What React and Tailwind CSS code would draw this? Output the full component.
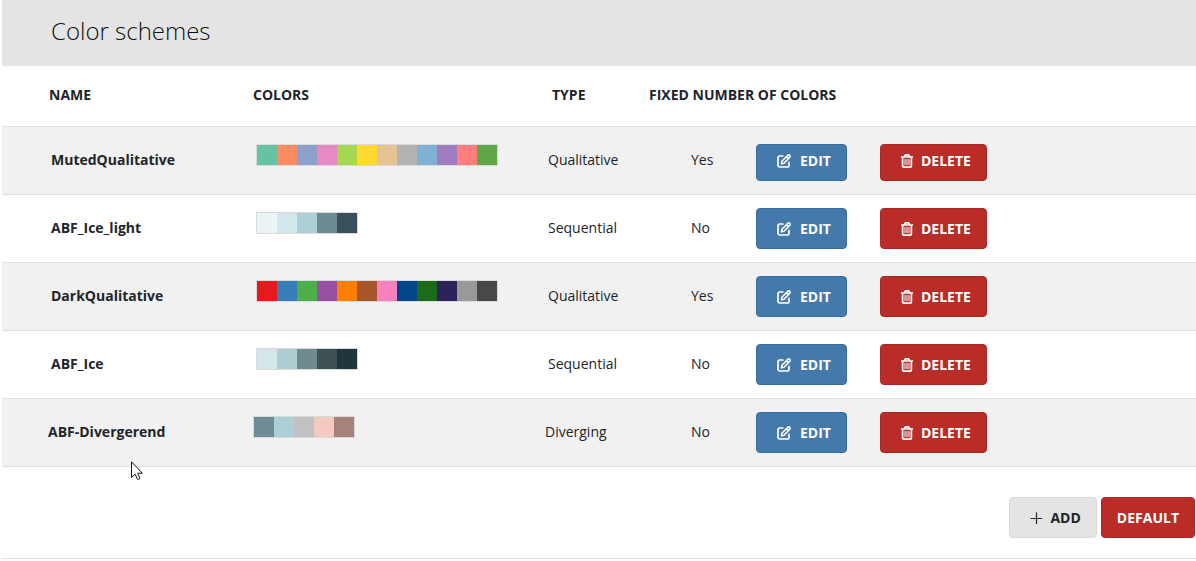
import React from "react";

const schemes = [
  {
    name: "MutedQualitative",
    type: "Qualitative",
    fixed: true,
    colors: ["#66c2a5", "#fc8d62", "#8da0cb", "#e78ac3", "#a6d854", "#ffd92f", "#e5c494", "#b3b3b3", "#80b1d3", "#9f7dc0", "#ff7f7f", "#61a644"],
  },
  {
    name: "ABF_Ice_light",
    type: "Sequential",
    fixed: false,
    colors: ["#eaf3f6", "#d4e7ec", "#aecfd6", "#6d8b92", "#384f5c"],
  },
  {
    name: "DarkQualitative",
    type: "Qualitative",
    fixed: true,
    colors: ["#e41a1c", "#377eb8", "#4daf4a", "#984ea3", "#ff7f00", "#a65628", "#f781bf", "#00468b", "#1b6b1a", "#2c235a", "#999999", "#484848"],
  },
  {
    name: "ABF_Ice",
    type: "Sequential",
    fixed: false,
    colors: ["#d5e6e9", "#adcfd3", "#6e8c8e", "#3d5052", "#20363e"],
  },
  {
    name: "ABF-Divergerend",
    type: "Diverging",
    fixed: false,
    colors: ["#6d8c95", "#aecfd6", "#c1c1c1", "#f4c9bf", "#a5837c"],
  },
];

const variants = {
  blue: "bg-[#4479ab] border-[#3a6d9d] text-white",
  red: "bg-[#b92c28] border-[#a82824] text-white",
  grey: "bg-[#e4e4e4] border-[#d9d9d9] text-[#212529]",
};

const Button = ({ variant, icon, size = "h-[41px] pt-px", children }) => (
  <button
    type="button"
    className={`inline-flex items-center gap-2 rounded border pr-[15px] font-bold uppercase ${icon ? "pl-5" : "pl-[15px]"} ${variants[variant]} ${size}`}
  >
    {icon}
    {children}
  </button>
);

const Swatches = ({ colors }) => (
  <div className="inline-flex border border-[#dadada]">
    {colors.map((color) => (
      <span key={color} className="h-5 w-5" style={{ backgroundColor: color }} />
    ))}
  </div>
);

const EditIcon = () => (
  <svg viewBox="0 0 15 14" className="h-[14px] w-[15px]" fill="none" stroke="currentColor" strokeWidth="1.7" strokeLinecap="round" strokeLinejoin="round">
    <path d="M5.800 2H2.700A1.700 1.700 0 0 0 1 3.700v7.600A1.700 1.700 0 0 0 2.700 13h7.600a1.700 1.700 0 0 0 1.700-1.700V8.400" />
    <path d="M4.900 7.200 10.700 1.400a1.400 1.400 0 0 1 2 2L7 9.200l-2.600.6zM9.400 2.700l2 2" strokeWidth="1.5" />
  </svg>
);

const TrashIcon = () => (
  <svg viewBox="0 0 12 14" className="h-[14px] w-3" fill="none" stroke="currentColor" strokeWidth="1.7" strokeLinecap="round" strokeLinejoin="round">
    <path d="M.5 3h11M3.200 2.800l.9-1.700c.1-.2.300-.3.500-.3h2.800c.2 0 .4.100.5.300l.9 1.700M1.600 3.200v8.500c0 .8.600 1.400 1.400 1.400h6c.8 0 1.400-.6 1.400-1.400V3.200" />
    <path d="M4 5.500v5.300M6 5.500v5.300M8 5.500v5.300" strokeWidth="1" />
  </svg>
);

const PlusIcon = () => (
  <svg viewBox="0 0 12 12" className="h-3 w-3" fill="none" stroke="currentColor" strokeWidth="1.2" strokeLinecap="round">
    <path d="M6.500 .8v10.700M1 6.500h10.700" />
  </svg>
);

const SchemeRow = ({ scheme, first, last }) => {
  const inset = last ? "" : "pl-[3px]";
  const buttonSize = first ? "h-[37px] pb-0.5" : "h-[41px] pt-px";

  return (
    <tr className="h-[68px] border-b border-[#e0e0e0] odd:bg-[#f1f1f1]">
      <td>
        <div className={`ml-[46px] font-bold ${inset}`}>{scheme.name}</div>
      </td>
      <td className="pt-[17px] align-top leading-none">
        <div className={inset}>
          <Swatches colors={scheme.colors} />
        </div>
      </td>
      <td>
        <div className={inset}>{scheme.type}</div>
      </td>
      <td className="pl-[42px]">{scheme.fixed ? "Yes" : "No"}</td>
      <td className="pb-[13px] align-bottom leading-none">
        <Button variant="blue" size={buttonSize} icon={<EditIcon />}>Edit</Button>
      </td>
      <td className="pb-[13px] align-bottom leading-none">
        <Button variant="red" size={buttonSize} icon={<TrashIcon />}>Delete</Button>
      </td>
    </tr>
  );
};

const Cursor = () => (
  <svg viewBox="0 0 12 19" className="pointer-events-none absolute top-[461px] left-[131px] h-[19px] w-3" fill="#fff" stroke="#15151f" strokeWidth="1">
    <path d="M.5 .8v15.700l3.600-3.400 2.300 5 .9.4 1.400-.6.2-.8-2.200-4.900h4.600z" />
  </svg>
);

const App = () => (
  <div className="relative bg-white pl-0.5 font-['Open_Sans',sans-serif] text-sm text-[#212529]">
    <header className="bg-[#e4e4e4] px-[49px] pt-[13px] pb-[17px]">
      <h1 className="text-2xl leading-9 font-light text-[#111]">Color schemes</h1>
    </header>

    <table className="w-full table-fixed border-collapse text-left">
      <colgroup>
        <col className="w-[251px]" />
        <col className="w-[292px]" />
        <col className="w-[104px]" />
        <col className="w-[107px]" />
        <col className="w-[124px]" />
        <col />
      </colgroup>
      <thead>
        <tr className="h-[60px] border-b border-[#e0e0e0] uppercase *:pb-0.5">
          <th className="pl-[47px]">Name</th>
          <th>Colors</th>
          <th className="pl-[7px]">Type</th>
          <th colSpan={3}>Fixed number of colors</th>
        </tr>
      </thead>
      <tbody>
        {schemes.map((scheme, i) => (
          <SchemeRow key={scheme.name} scheme={scheme} first={i === 0} last={i === schemes.length - 1} />
        ))}
      </tbody>
    </table>

    <div className="flex justify-end gap-1 border-b border-[#e0e0e0] pt-[30px] pr-px pb-5">
      <Button variant="grey" icon={<PlusIcon />}>Add</Button>
      <Button variant="red">Default</Button>
    </div>

    <Cursor />
  </div>
);

export default App;
